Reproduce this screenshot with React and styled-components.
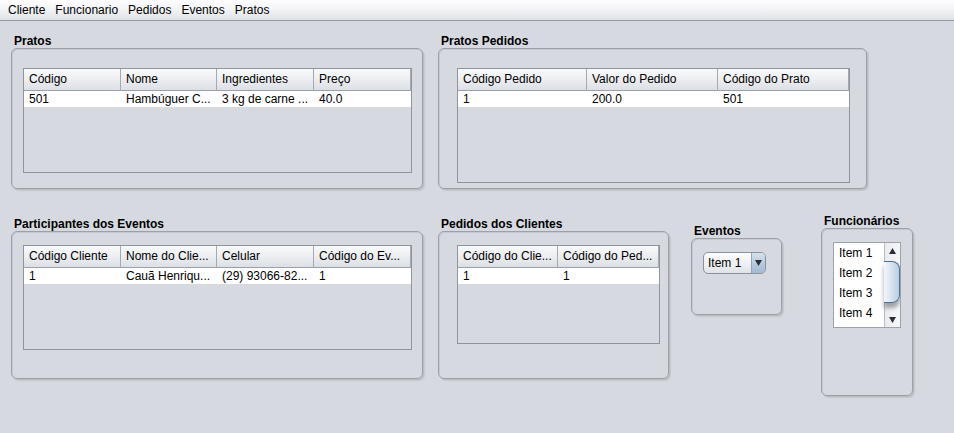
import React from 'react';
import styled, { createGlobalStyle } from 'styled-components';

const GlobalStyle = createGlobalStyle`
  html, body {
    margin: 0;
    padding: 0;
    background: #d6d9df;
  }
  body {
    font-family: 'Liberation Sans', Arial, sans-serif;
    font-size: 12px;
    color: #000000;
  }
`;

const menus = ['Cliente', 'Funcionario', 'Pedidos', 'Eventos', 'Pratos'];

const pratos = {
  columns: [97, 96, 97, 97],
  head: ['Código', 'Nome', 'Ingredientes', 'Preço'],
  rows: [['501', 'Hambúguer C...', '3 kg de carne ...', '40.0']],
};

const pratosPedidos = {
  columns: [129, 131, 131],
  head: ['Código Pedido', 'Valor do Pedido', 'Código do Prato'],
  rows: [['1', '200.0', '501']],
};

const participantes = {
  columns: [97, 96, 97, 97],
  head: ['Código Cliente', 'Nome do Clie...', 'Celular', 'Código do Ev...'],
  rows: [['1', 'Cauã Henriqu...', '(29) 93066-82...', '1']],
};

const pedidosClientes = {
  columns: [100, 101],
  head: ['Código do Clie...', 'Código do Ped...'],
  rows: [['1', '1']],
};

const Table = ({ data, width, height }) => {
  const template = data.columns.map((c) => `${c}px`).join(' ');
  return (
    <TableBox $width={width} $height={height}>
      <TableGrid $cols={template}>
        {data.head.map((h) => (
          <HeadCell key={h}>{h}</HeadCell>
        ))}
        {data.rows.map((row, i) =>
          row.map((cell, j) => <Cell key={`${i}-${j}`}>{cell}</Cell>)
        )}
      </TableGrid>
    </TableBox>
  );
};

const Triangle = ({ up }) => (
  <svg width="7" height="6" viewBox="0 0 7 6">
    <path d={up ? 'M3.5 0 L7 6 L0 6 Z' : 'M0 0 L7 0 L3.5 6 Z'} fill="#2b2f36" />
  </svg>
);

const Panel = ({ title, width, height, offset, pad, children }) => (
  <PanelWrap $width={width} $offset={offset}>
    <PanelTitle>{title}</PanelTitle>
    <PanelBox $height={height} $pad={pad}>
      {children}
    </PanelBox>
  </PanelWrap>
);

const App = () => (
  <Page>
    <GlobalStyle />
    <MenuBar>
      {menus.map((m) => (
        <MenuItem key={m}>{m}</MenuItem>
      ))}
    </MenuBar>
    <Content>
      <TopRow>
        <Panel title="Pratos" width={412} height={141} pad="19px 11px">
          <Table data={pratos} width={389} height={105} />
        </Panel>
        <Panel title="Pratos Pedidos" width={429} height={141} pad="19px 18px">
          <Table data={pratosPedidos} width={393} height={115} />
        </Panel>
      </TopRow>
      <BottomRow>
        <Panel title="Participantes dos Eventos" width={412} height={148} offset={3} pad="13px 11px">
          <Table data={participantes} width={389} height={105} />
        </Panel>
        <Panel title="Pedidos dos Clientes" width={231} height={148} offset={3} pad="13px 18px">
          <Table data={pedidosClientes} width={203} height={99} />
        </Panel>
        <Panel title="Eventos" width={91} height={77} offset={10} pad="13px 11px">
          <Combo>
            <ComboText>Item 1</ComboText>
            <ComboButton>
              <Triangle />
            </ComboButton>
          </Combo>
        </Panel>
        <Panel title="Funcionários" width={92} height={168} pad="13px 11px">
          <List>
            <ListItems>
              {['Item 1', 'Item 2', 'Item 3', 'Item 4'].map((it) => (
                <ListItem key={it}>{it}</ListItem>
              ))}
            </ListItems>
            <ScrollBar>
              <ScrollArrow>
                <Triangle up />
              </ScrollArrow>
              <ScrollTrack>
                <Thumb />
              </ScrollTrack>
              <ScrollArrow>
                <Triangle />
              </ScrollArrow>
            </ScrollBar>
          </List>
        </Panel>
      </BottomRow>
    </Content>
  </Page>
);

export default App;

const Page = styled.div`
  width: 954px;
  height: 433px;
  background: #d6d9df;
  overflow: hidden;
`;

const MenuBar = styled.div`
  height: 20px;
  display: flex;
  padding-left: 3px;
  background: linear-gradient(#fdfdfe, #f3f4f6 45%, #dfe2e7);
  border-bottom: 1px solid #979ba7;
`;

const MenuItem = styled.span`
  line-height: 20px;
  padding: 0 5px;
  color: #000000;
`;

const Content = styled.div`
  padding: 13px 0 0 11px;
  display: flex;
  flex-direction: column;
  gap: 25px;
`;

const TopRow = styled.div`
  display: flex;
  gap: 15px;
`;

const BottomRow = styled.div`
  display: flex;
  align-items: flex-start;
  gap: 15px;

  & > :nth-child(3) {
    margin-left: 7px;
  }
  & > :nth-child(4) {
    margin-left: 24px;
  }
`;

const PanelWrap = styled.div`
  width: ${(p) => p.$width}px;
  margin-top: ${(p) => p.$offset || 0}px;
  display: flex;
  flex-direction: column;
`;

const PanelTitle = styled.div`
  font-weight: bold;
  line-height: 14px;
  padding-left: 3px;
  white-space: nowrap;
`;

const PanelBox = styled.div`
  box-sizing: border-box;
  height: ${(p) => p.$height}px;
  padding: ${(p) => p.$pad};
  border: 1px solid #9ca0a8;
  border-radius: 6px;
  box-shadow: inset 1px 1px 0 #c6c9cf, 1px 1px 0 #b8bcc3, 2px 2px 1px #c5c8ce;
`;

const TableBox = styled.div`
  box-sizing: border-box;
  width: ${(p) => p.$width}px;
  height: ${(p) => p.$height}px;
  border: 1px solid #8f949d;
  overflow: hidden;
`;

const TableGrid = styled.div`
  display: grid;
  grid-template-columns: ${(p) => p.$cols};
  grid-auto-rows: 16px;
  grid-template-rows: 22px;
`;

const HeadCell = styled.div`
  box-sizing: border-box;
  height: 22px;
  line-height: 21px;
  padding-left: 5px;
  white-space: nowrap;
  overflow: hidden;
  background: linear-gradient(#f8f9fa, #eceef1 50%, #dcdfe4);
  border-right: 1px solid #a5a9b1;
  border-bottom: 1px solid #9ca0a8;
`;

const Cell = styled.div`
  height: 16px;
  line-height: 16px;
  padding-left: 5px;
  white-space: nowrap;
  overflow: hidden;
  background: #ffffff;
`;

const Combo = styled.div`
  box-sizing: border-box;
  width: 63px;
  height: 22px;
  display: flex;
  border: 1px solid #8a929c;
  border-radius: 5px;
  overflow: hidden;
  background: linear-gradient(#fdfdfe, #eef0f2 55%, #dfe3e7);
`;

const ComboText = styled.div`
  flex: 1;
  line-height: 20px;
  padding-left: 4px;
`;

const ComboButton = styled.div`
  width: 13px;
  display: flex;
  align-items: center;
  justify-content: center;
  border-left: 1px solid #93a5ba;
  background: linear-gradient(#d7e2ee, #b6c9dd 55%, #a3bad2);
`;

const List = styled.div`
  box-sizing: border-box;
  width: 68px;
  height: 86px;
  display: flex;
  border: 1px solid #9ea3aa;
  background: #ffffff;
  overflow: hidden;
`;

const ListItems = styled.div`
  flex: 1;
  display: flex;
  flex-direction: column;
`;

const ListItem = styled.div`
  height: 20px;
  line-height: 20px;
  padding-left: 5px;
`;

const ScrollBar = styled.div`
  width: 15px;
  display: flex;
  flex-direction: column;
  background: linear-gradient(90deg, #e9ecef, #f6f7f8);
  border-left: 1px solid #b9bec5;
`;

const ScrollArrow = styled.div`
  height: 15px;
  display: flex;
  align-items: center;
  justify-content: center;
`;

const ScrollTrack = styled.div`
  flex: 1;
  padding-top: 3px;
`;

const Thumb = styled.div`
  box-sizing: border-box;
  height: 42px;
  margin-left: -1px;
  border: 1px solid #4e6f94;
  border-left: none;
  border-radius: 0 8px 8px 0;
  background: linear-gradient(90deg, #f2f6fa, #d3e1ee 55%, #b9cde2);
  box-shadow: 0 5px 4px rgba(60, 64, 72, 0.45);
`;
